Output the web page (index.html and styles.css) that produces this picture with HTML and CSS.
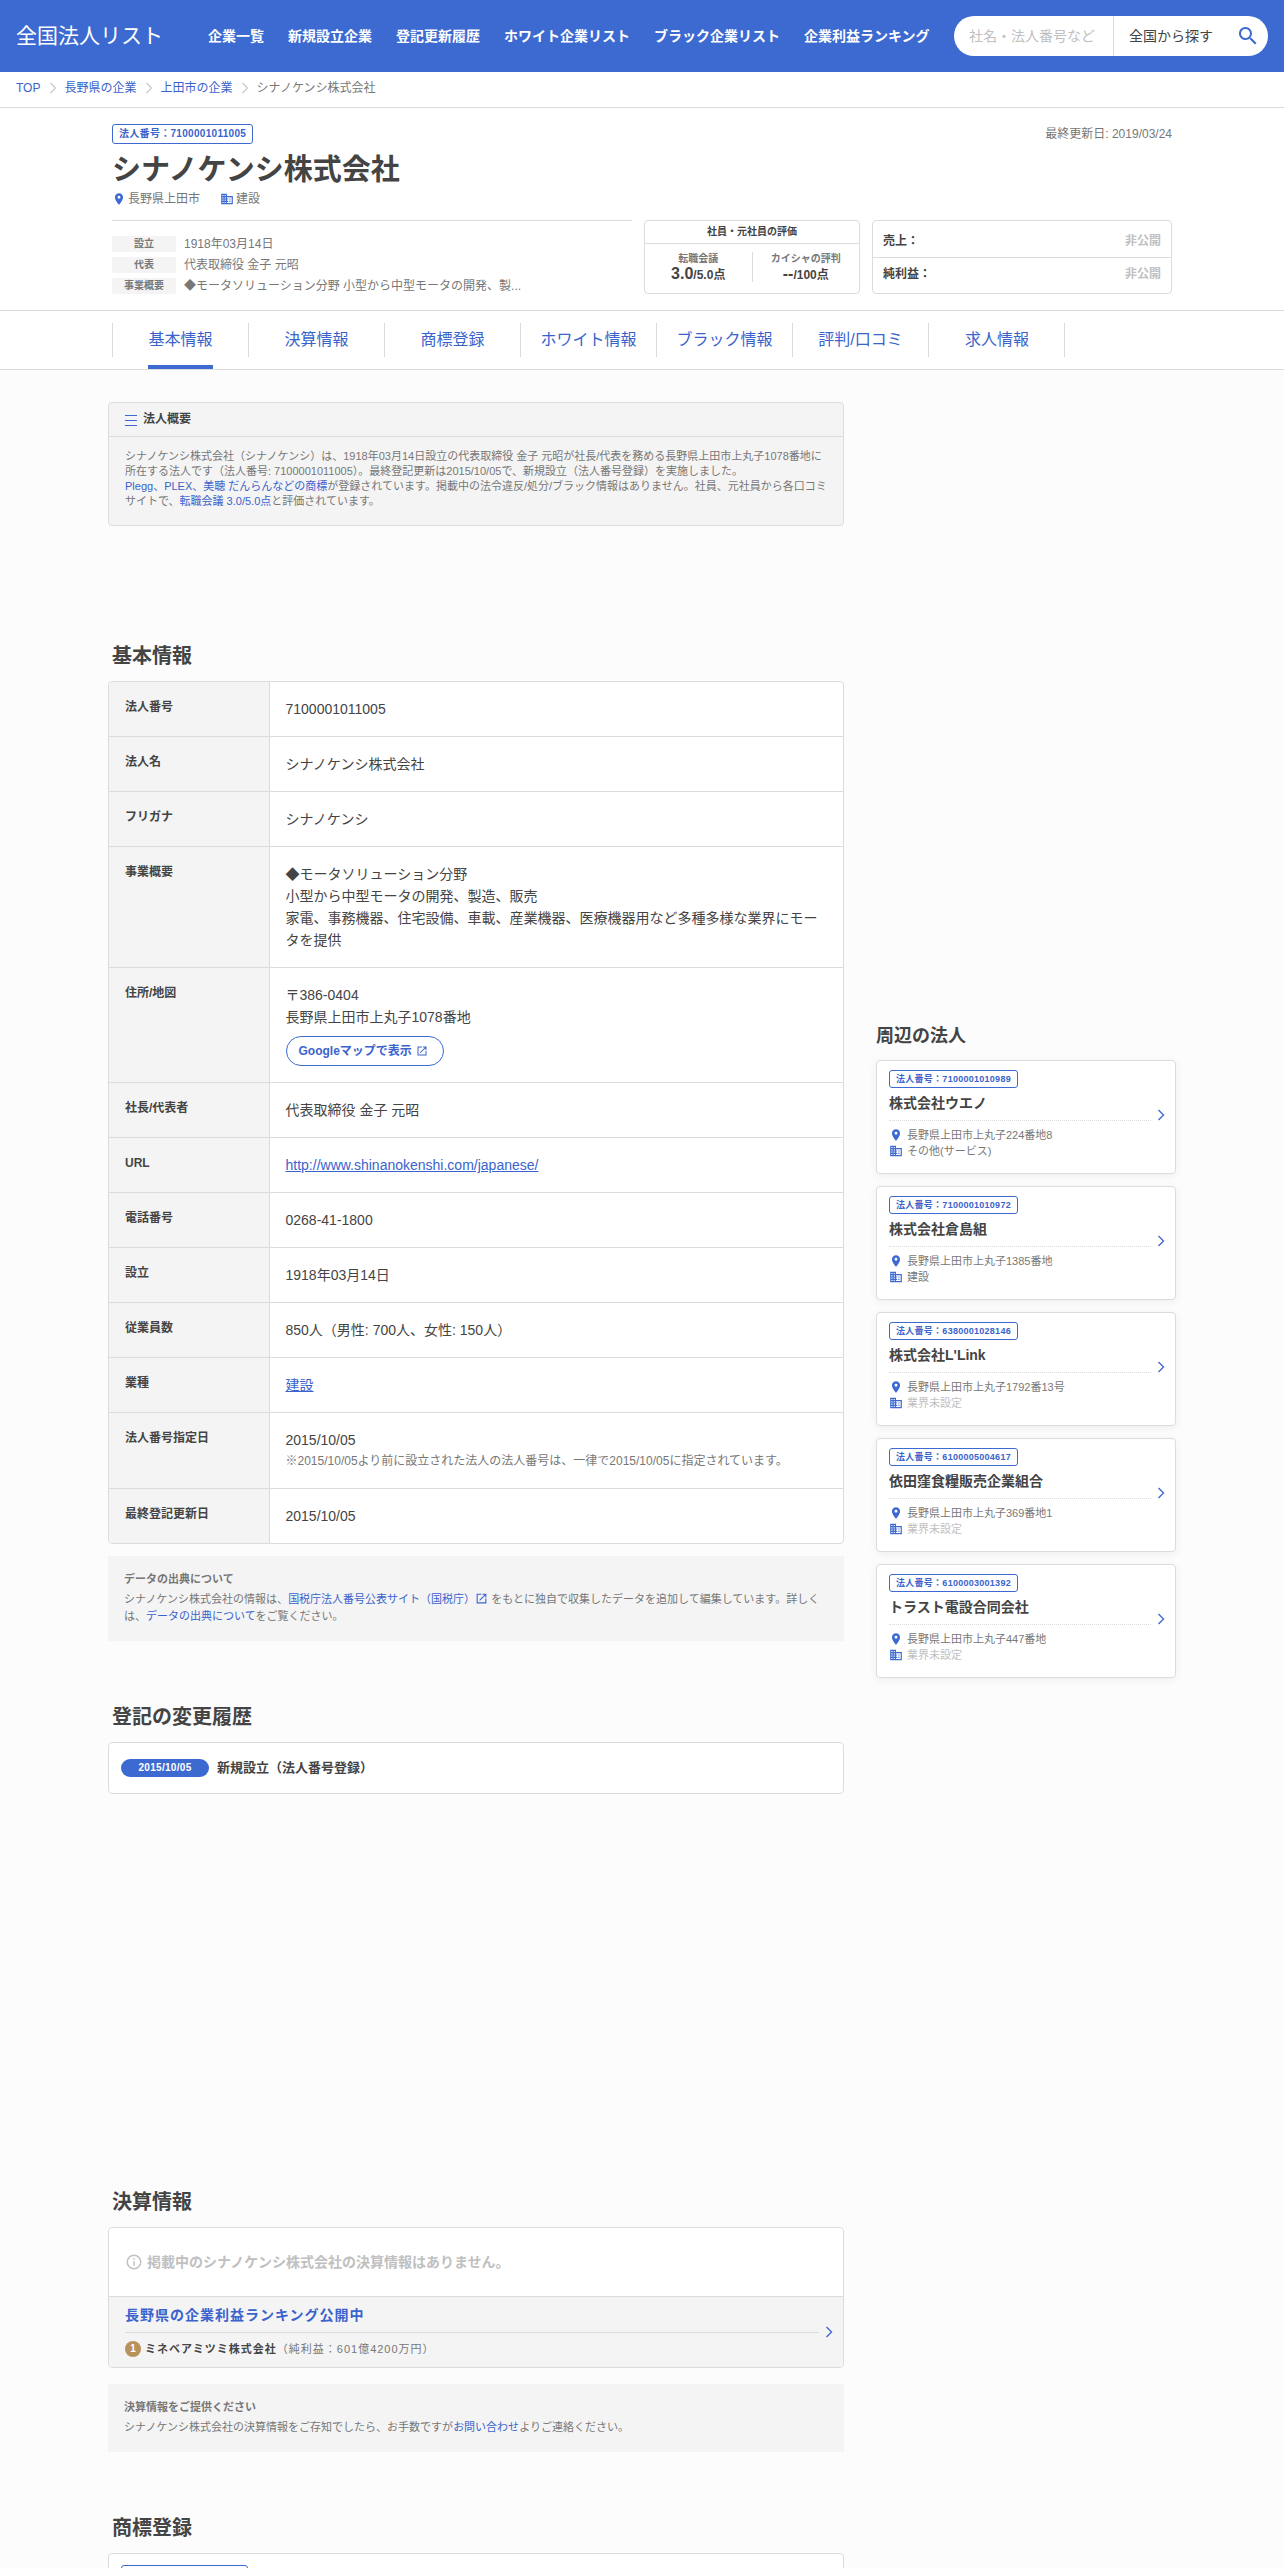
FILE: index.html
```html
<!DOCTYPE html>
<html lang="ja">
<head>
<meta charset="utf-8">
<meta name="viewport" content="width=device-width, initial-scale=1">
<title>シナノケンシ株式会社 | 全国法人リスト</title>
<link rel="stylesheet" href="styles.css">
</head>
<body>
<svg class="sprite" aria-hidden="true">
  <symbol id="i-pin" viewBox="0 0 24 24"><path d="M12 2C8.1 2 5 5.100 5 9c0 5.200 7 13 7 13s7-7.800 7-13c0-3.900-3.100-7-7-7zm0 9.500a2.500 2.500 0 1 1 0-5 2.500 2.500 0 0 1 0 5z"/></symbol>
  <symbol id="i-building" viewBox="0 0 24 24"><path d="M12 7V3H2v18h20V7H12zM6 19H4v-2h2v2zm0-4H4v-2h2v2zm0-4H4V9h2v2zm0-4H4V5h2v2zm4 12H8v-2h2v2zm0-4H8v-2h2v2zm0-4H8V9h2v2zm0-4H8V5h2v2zm10 12h-8v-2h2v-2h-2v-2h2v-2h-2V9h8v10zm-2-8h-2v2h2v-2zm0 4h-2v2h2v-2z"/></symbol>
  <symbol id="i-open" viewBox="0 0 24 24"><path d="M19 19H5V5h7V3H3v18h18v-9h-2v7zM14 3v2h3.600l-9.800 9.800 1.400 1.400L19 6.400V10h2V3h-7z"/></symbol>
  <symbol id="i-search" viewBox="0 0 24 24"><path d="M15.500 14h-.8l-.3-.3A6.500 6.500 0 1 0 13.700 14.400l.3.3v.8l5 5 1.500-1.500-5-5zm-6 0a4.500 4.500 0 1 1 0-9 4.500 4.500 0 0 1 0 9z"/></symbol>
  <symbol id="i-info" viewBox="0 0 24 24"><path d="M11 7h2v2h-2zm0 4h2v6h-2zm1-9a10 10 0 1 0 0 20 10 10 0 0 0 0-20zm0 18a8 8 0 1 1 0-16 8 8 0 0 1 0 16z"/></symbol>
  <symbol id="i-next" viewBox="0 0 8 12"><path d="M1.500 1l5 5-5 5" fill="none" stroke="currentColor" stroke-width="1.300"/></symbol>
</svg>

<header class="site-header">
  <a class="logo" href="#">全国法人リスト</a>
  <nav class="global-nav">
    <a href="#">企業一覧</a>
    <a href="#">新規設立企業</a>
    <a href="#">登記更新履歴</a>
    <a href="#">ホワイト企業リスト</a>
    <a href="#">ブラック企業リスト</a>
    <a href="#">企業利益ランキング</a>
  </nav>
  <form class="search">
    <input type="text" aria-label="キーワード" placeholder="社名・法人番号など">
    <select aria-label="地域"><option>全国から探す</option></select>
    <button type="button" aria-label="検索"><svg><use href="#i-search"/></svg></button>
  </form>
</header>

<nav class="breadcrumb" aria-label="パンくず">
  <a href="#">TOP</a>
  <svg><use href="#i-next"/></svg>
  <a href="#">長野県の企業</a>
  <svg><use href="#i-next"/></svg>
  <a href="#">上田市の企業</a>
  <svg><use href="#i-next"/></svg>
  <span>シナノケンシ株式会社</span>
</nav>

<section class="company">
  <div class="wrap">
    <div class="company-top">
      <span class="badge">法人番号：7100001011005</span>
      <span class="updated">最終更新日: 2019/03/24</span>
    </div>
    <h1>シナノケンシ株式会社</h1>
    <div class="company-meta">
      <span><svg class="icon"><use href="#i-pin"/></svg>長野県上田市</span>
      <span><svg class="icon"><use href="#i-building"/></svg>建設</span>
    </div>
    <div class="company-grid">
      <dl class="facts">
        <div><dt>設立</dt><dd>1918年03月14日</dd></div>
        <div><dt>代表</dt><dd>代表取締役 金子 元昭</dd></div>
        <div><dt>事業概要</dt><dd>◆モータソリューション分野 小型から中型モータの開発、製...</dd></div>
      </dl>
      <div class="rating">
        <h2>社員・元社員の評価</h2>
        <div class="scores">
          <div><p>転職会議</p><strong><b>3.0</b>/5.0点</strong></div>
          <div><p>カイシャの評判</p><strong><b>--</b>/100点</strong></div>
        </div>
      </div>
      <dl class="money">
        <div><dt>売上：</dt><dd>非公開</dd></div>
        <div><dt>純利益：</dt><dd>非公開</dd></div>
      </dl>
    </div>
  </div>
</section>

<nav class="tabs" aria-label="企業情報">
  <ul>
    <li><a class="current" href="#">基本情報</a></li>
    <li><a href="#">決算情報</a></li>
    <li><a href="#">商標登録</a></li>
    <li><a href="#">ホワイト情報</a></li>
    <li><a href="#">ブラック情報</a></li>
    <li><a href="#">評判/口コミ</a></li>
    <li><a href="#">求人情報</a></li>
  </ul>
</nav>

<div class="columns">
  <main>
    <section class="overview">
      <h2><svg viewBox="0 0 12 12"><path d="M0 1.500h12M0 6.500h12M0 11.500h12"/></svg>法人概要</h2>
      <p>シナノケンシ株式会社（シナノケンシ）は、1918年03月14日設立の代表取締役 金子 元昭が社長/代表を務める長野県上田市上丸子1078番地に所在する法人です（法人番号: 7100001011005）。最終登記更新は2015/10/05で、新規設立（法人番号登録）を実施しました。<br><a href="#">Plegg、PLEX、美聴 だんらんなどの商標</a>が登録されています。掲載中の法令違反/処分/ブラック情報はありません。社員、元社員から各口コミサイトで、<a href="#">転職会議 3.0/5.0点</a>と評価されています。</p>
    </section>
    <div class="ad ad-small"></div>

    <section class="block">
      <h2>基本情報</h2>
      <div class="card">
        <table>
          <tr><th scope="row">法人番号</th><td>7100001011005</td></tr>
          <tr><th scope="row">法人名</th><td>シナノケンシ株式会社</td></tr>
          <tr><th scope="row">フリガナ</th><td>シナノケンシ</td></tr>
          <tr><th scope="row">事業概要</th><td>◆モータソリューション分野<br>小型から中型モータの開発、製造、販売<br>家電、事務機器、住宅設備、車載、産業機器、医療機器用など多種多様な業界にモータを提供</td></tr>
          <tr><th scope="row">住所/地図</th><td>〒386-0404<br>長野県上田市上丸子1078番地<a class="map-link" href="#">Googleマップで表示<svg><use href="#i-open"/></svg></a></td></tr>
          <tr><th scope="row">社長/代表者</th><td>代表取締役 金子 元昭</td></tr>
          <tr><th scope="row">URL</th><td><a href="#">http://www.shinanokenshi.com/japanese/</a></td></tr>
          <tr><th scope="row">電話番号</th><td>0268-41-1800</td></tr>
          <tr><th scope="row">設立</th><td>1918年03月14日</td></tr>
          <tr><th scope="row">従業員数</th><td>850人（男性: 700人、女性: 150人）</td></tr>
          <tr><th scope="row">業種</th><td><a href="#">建設</a></td></tr>
          <tr><th scope="row">法人番号指定日</th><td>2015/10/05<small>※2015/10/05より前に設立された法人の法人番号は、一律で2015/10/05に指定されています。</small></td></tr>
          <tr><th scope="row">最終登記更新日</th><td>2015/10/05</td></tr>
        </table>
      </div>
      <div class="note">
        <h3>データの出典について</h3>
        <p>シナノケンシ株式会社の情報は、<a href="#">国税庁法人番号公表サイト（国税庁）<svg><use href="#i-open"/></svg></a> をもとに独自で収集したデータを追加して編集しています。詳しくは、<a href="#">データの出典について</a>をご覧ください。</p>
      </div>
    </section>

    <section class="block">
      <h2>登記の変更履歴</h2>
      <div class="card history">
        <time>2015/10/05</time>
        <strong>新規設立（法人番号登録）</strong>
      </div>
    </section>
    <div class="ad ad-large"></div>

    <section class="block">
      <h2>決算情報</h2>
      <div class="card">
        <p class="empty"><svg><use href="#i-info"/></svg>掲載中のシナノケンシ株式会社の決算情報はありません。</p>
        <a class="ranking" href="#">
          <span class="ranking-body">
            <span class="ranking-title">長野県の企業利益ランキング公開中</span>
            <span class="ranking-item"><i>1</i><b>ミネベアミツミ株式会社</b>（純利益：601億4200万円）</span>
          </span>
          <svg class="next"><use href="#i-next"/></svg>
        </a>
      </div>
      <div class="note note-spaced">
        <h3>決算情報をご提供ください</h3>
        <p>シナノケンシ株式会社の決算情報をご存知でしたら、お手数ですが<a href="#">お問い合わせ</a>よりご連絡ください。</p>
      </div>
    </section>

    <section class="block">
      <h2>商標登録</h2>
      <div class="card trademark">
        <span class="badge">登録番号：第4517082号</span>
      </div>
    </section>
  </main>

  <aside>
    <div class="ad ad-side"></div>
    <h2>周辺の法人</h2>
    <a class="near" href="#">
      <span class="near-body"><span class="badge">法人番号：7100001010989</span><b>株式会社ウエノ</b>
        <span class="near-meta"><svg class="icon"><use href="#i-pin"/></svg>長野県上田市上丸子224番地8</span>
        <span class="near-meta"><svg class="icon"><use href="#i-building"/></svg>その他(サービス)</span></span>
      <svg class="next"><use href="#i-next"/></svg>
    </a>
    <a class="near" href="#">
      <span class="near-body"><span class="badge">法人番号：7100001010972</span><b>株式会社倉島組</b>
        <span class="near-meta"><svg class="icon"><use href="#i-pin"/></svg>長野県上田市上丸子1385番地</span>
        <span class="near-meta"><svg class="icon"><use href="#i-building"/></svg>建設</span></span>
      <svg class="next"><use href="#i-next"/></svg>
    </a>
    <a class="near" href="#">
      <span class="near-body"><span class="badge">法人番号：6380001028146</span><b>株式会社L'Link</b>
        <span class="near-meta"><svg class="icon"><use href="#i-pin"/></svg>長野県上田市上丸子1792番13号</span>
        <span class="near-meta unset"><svg class="icon"><use href="#i-building"/></svg>業界未設定</span></span>
      <svg class="next"><use href="#i-next"/></svg>
    </a>
    <a class="near" href="#">
      <span class="near-body"><span class="badge">法人番号：6100005004617</span><b>依田窪食糧販売企業組合</b>
        <span class="near-meta"><svg class="icon"><use href="#i-pin"/></svg>長野県上田市上丸子369番地1</span>
        <span class="near-meta unset"><svg class="icon"><use href="#i-building"/></svg>業界未設定</span></span>
      <svg class="next"><use href="#i-next"/></svg>
    </a>
    <a class="near" href="#">
      <span class="near-body"><span class="badge">法人番号：6100003001392</span><b>トラスト電設合同会社</b>
        <span class="near-meta"><svg class="icon"><use href="#i-pin"/></svg>長野県上田市上丸子447番地</span>
        <span class="near-meta unset"><svg class="icon"><use href="#i-building"/></svg>業界未設定</span></span>
      <svg class="next"><use href="#i-next"/></svg>
    </a>
  </aside>
</div>
</body>
</html>
```
FILE: styles.css
```css
:root {
  --blue: #3d6ad1;
  --link: #3a63cc;
  --text: #444;
  --sub: #777;
  --faint: #c0c0c0;
  --line: #dcdcdc;
  --fill: #f4f4f4;
}

* { box-sizing: border-box; }

body {
  margin: 0;
  background: #fcfcfc;
  color: var(--text);
  font: 14px/22px "Liberation Sans", "Noto Sans CJK JP", sans-serif;
}

h1, h2, h3, p, dl, dd, ul { margin: 0; padding: 0; }
a { color: var(--link); text-decoration: none; }
svg { flex: none; fill: currentColor; }
.sprite { display: none; }
.icon { width: 14px; height: 14px; color: var(--blue); }
.next { width: 8px; height: 12px; color: var(--link); }

/* Header */
.site-header {
  display: flex;
  align-items: center;
  height: 72px;
  padding: 0 16px;
  background: var(--blue);
  white-space: nowrap;
}
.logo { margin-right: 45px; color: #fff; font-size: 21px; }
.global-nav { display: flex; gap: 24px; }
.global-nav a { color: #fff; font-weight: bold; }
.search {
  display: flex;
  width: 314px;
  height: 40px;
  margin-left: auto;
  border-radius: 20px;
  background: #fff;
  overflow: hidden;
}
.search input, .search select, .search button {
  min-width: 0;
  margin: 0;
  border: 0;
  background: none;
  color: var(--text);
  font: inherit;
}
.search input { width: 160px; padding: 0 0 0 15px; border-right: 1px solid var(--line); }
.search input::placeholder { color: var(--faint); }
.search select { flex: 1; padding: 0 0 0 15px; appearance: none; }
.search button { display: flex; align-items: center; width: 32px; padding: 0; color: var(--blue); }
.search button svg { width: 24px; height: 24px; }

.breadcrumb {
  display: flex;
  align-items: center;
  height: 36px;
  padding: 0 16px 4px;
  border-bottom: 1px solid var(--line);
  background: #fff;
  color: var(--sub);
  font-size: 12px;
}
.breadcrumb svg { width: 8px; height: 12px; margin: 0 7px 0 9px; color: #ccc; }

/* Company summary */
.company { background: #fff; border-bottom: 1px solid var(--line); }
.wrap { max-width: 1068px; margin: 0 auto; padding: 16px 4px 14px; }
.company-top { display: flex; justify-content: space-between; height: 20px; }
.badge {
  display: inline-block;
  padding: 0 6px;
  border: 1px solid var(--blue);
  border-radius: 3px;
  color: var(--link);
  font-size: 10px;
  line-height: 18px;
  font-weight: bold;
  letter-spacing: .03em;
}
.updated { color: var(--sub); font-size: 12px; line-height: 20px; }
h1 { margin-top: 6px; font-size: 29px; line-height: 40px; }
.company-meta { display: flex; gap: 20px; color: var(--sub); font-size: 12px; line-height: 18px; }
.company-meta span { display: flex; align-items: center; gap: 2px; }
.company-grid {
  display: grid;
  grid-template-columns: 1fr 216px 300px;
  align-items: start;
  gap: 12px;
  margin-top: 12px;
}
.facts { padding-top: 12px; border-top: 1px solid var(--line); font-size: 12px; color: var(--sub); }
.facts div { display: flex; align-items: center; gap: 8px; height: 21px; white-space: nowrap; }
.facts dt {
  width: 64px;
  border-radius: 2px;
  background: var(--fill);
  font-size: 10px;
  line-height: 16px;
  font-weight: bold;
  text-align: center;
}
.rating, .money { height: 74px; border: 1px solid var(--line); border-radius: 4px; }
.rating h2 { border-bottom: 1px solid var(--line); font-size: 10px; line-height: 22px; text-align: center; }
.scores { display: flex; padding: 8px 0; }
.scores div { flex: 1; height: 30px; text-align: center; white-space: nowrap; }
.scores div + div { border-left: 1px solid var(--line); }
.scores p { font-size: 10px; line-height: 13px; font-weight: bold; color: var(--sub); }
.scores strong { display: block; font-size: 12px; line-height: 18px; }
.scores b { font-size: 16px; }
.money div {
  display: flex;
  justify-content: space-between;
  align-items: center;
  height: 36px;
  padding: 4px 10px 0;
  font-size: 12px;
  font-weight: bold;
}
.money div + div { padding: 0 10px 4px; border-top: 1px solid var(--line); }
.money dd { color: var(--faint); }

/* Tabs */
.tabs { background: #fff; border-bottom: 1px solid var(--line); }
.tabs ul { display: flex; max-width: 1060px; margin: 0 auto; list-style: none; }
.tabs li {
  display: flex;
  justify-content: center;
  width: 136px;
  height: 58px;
  padding-left: 1px;
  background: linear-gradient(var(--line), var(--line)) left center / 1px 34px no-repeat;
}
.tabs li:last-child {
  width: 137px;
  background:
    linear-gradient(var(--line), var(--line)) left center / 1px 34px no-repeat,
    linear-gradient(var(--line), var(--line)) right center / 1px 34px no-repeat;
}
.tabs a { font-size: 16px; line-height: 58px; white-space: nowrap; }
.tabs .current { border-bottom: 4px solid var(--blue); }

/* Page columns */
.columns {
  display: grid;
  grid-template-columns: minmax(0, 1fr) 300px;
  gap: 32px;
  max-width: 1068px;
  margin: 0 auto;
  padding: 32px 0 0;
}
.ad-small { height: 54px; }
.ad-large { height: 332px; }
.ad-side { height: 600px; }

.overview { border: 1px solid var(--line); border-radius: 4px; background: var(--fill); }
.overview h2 {
  display: flex;
  align-items: center;
  gap: 6px;
  padding: 0 16px;
  border-bottom: 1px solid var(--line);
  font-size: 12px;
  line-height: 33px;
}
.overview h2 svg { width: 12px; height: 12px; fill: none; stroke: var(--blue); }
.overview p { padding: 12px 16px 16px; color: var(--sub); font-size: 11px; line-height: 15px; }

.block { margin-top: 61px; }
.block h2 { margin: 0 4px 10px; font-size: 20px; line-height: 30px; }
.card { border: 1px solid var(--line); border-radius: 4px; background: #fff; overflow: hidden; }

table { width: 100%; border-collapse: collapse; }
th, td { padding: 16px; border-bottom: 1px solid var(--line); text-align: left; vertical-align: top; }
tr:last-child > * { border-bottom: 0; }
th { width: 160px; border-right: 1px solid var(--line); background: var(--fill); font-size: 12px; line-height: 18px; }
td a { text-decoration: underline; }
td small { display: block; color: var(--sub); font-size: 12px; line-height: 21px; }
td .map-link {
  display: flex;
  align-items: center;
  gap: 4px;
  width: 158px;
  height: 30px;
  margin-top: 8px;
  padding: 0 12px;
  border: 1px solid var(--blue);
  border-radius: 15px;
  font-size: 12px;
  font-weight: bold;
  text-decoration: none;
  white-space: nowrap;
}
.map-link svg { width: 12px; height: 12px; }

.note { margin-top: 12px; padding: 16px; background: var(--fill); color: var(--sub); font-size: 11px; line-height: 17px; }
.note-spaced { margin-top: 16px; }
.note h3 { margin-bottom: 4px; font-size: 11px; line-height: 15px; }
.note svg { width: 13px; height: 13px; vertical-align: -2px; }

.history { display: flex; align-items: center; gap: 8px; padding: 14px 12px; }
.history time {
  width: 88px;
  border-radius: 9px;
  background: var(--blue);
  color: #fff;
  font-size: 10px;
  line-height: 18px;
  font-weight: bold;
  letter-spacing: .03em;
  text-align: center;
}
.history strong { font-size: 13px; }

.empty { display: flex; align-items: center; gap: 4px; padding: 23px 16px; color: var(--faint); font-weight: bold; }
.empty svg { width: 18px; height: 18px; }
.ranking {
  display: flex;
  align-items: center;
  gap: 6px;
  padding: 7px 10px 7px 16px;
  border-top: 1px solid var(--line);
  background: var(--fill);
  letter-spacing: 1px;
}
.ranking-body { flex: 1; }
.ranking-title { display: block; padding-bottom: 6px; border-bottom: 1px solid var(--line); font-weight: bold; }
.ranking-item { display: flex; align-items: center; padding-top: 5px; color: var(--sub); font-size: 11px; }
.ranking-item b { color: var(--text); }
.ranking-item i {
  width: 16px;
  margin-right: 4px;
  border-radius: 8px;
  background: #b8925a;
  color: #fff;
  font-size: 10px;
  line-height: 16px;
  font-style: normal;
  font-weight: bold;
  text-align: center;
  letter-spacing: 0;
}
.trademark { padding: 9px 12px; line-height: 20px; }

/* Sidebar */
aside h2 { margin: 21px 0 10px; font-size: 18px; line-height: 27px; }
.near {
  display: flex;
  align-items: center;
  gap: 6px;
  height: 114px;
  margin-bottom: 12px;
  padding: 0 10px 5px 12px;
  border: 1px solid var(--line);
  border-radius: 4px;
  background: #fff;
  box-shadow: 0 2px 8px rgba(0, 0, 0, .06);
}
.near-body { flex: 1; display: flex; flex-direction: column; }
.near .badge { align-self: flex-start; font-size: 9px; line-height: 16px; }
.near b {
  margin: 4px 0 6px;
  padding-bottom: 6px;
  border-bottom: 1px dotted var(--line);
  color: var(--text);
}
.near-meta { display: flex; align-items: center; gap: 4px; color: var(--sub); font-size: 11px; line-height: 16px; }
.unset { color: var(--faint); }
```
